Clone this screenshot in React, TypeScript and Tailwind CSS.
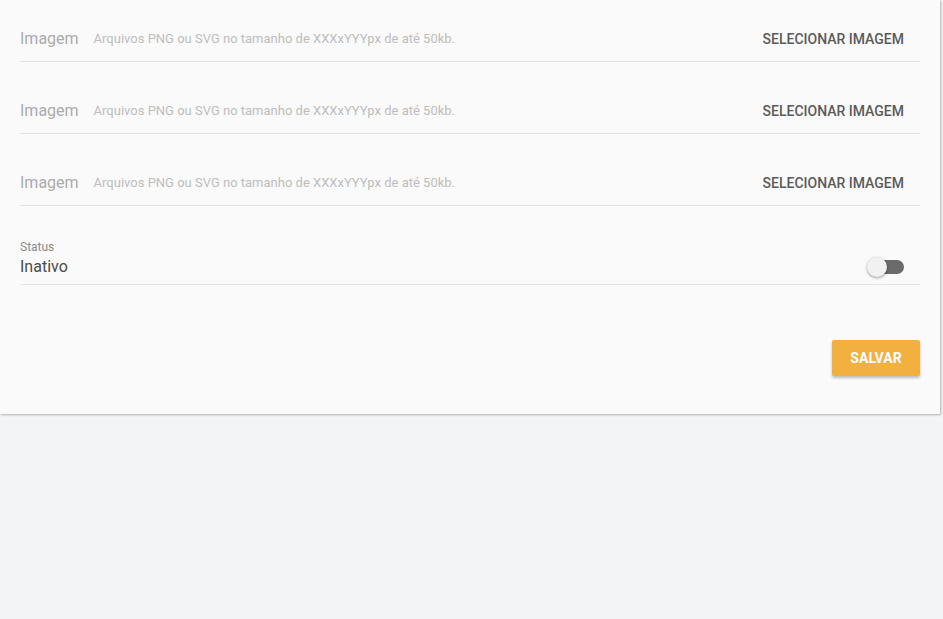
const font = { fontFamily: 'Roboto, "Liberation Sans", sans-serif' };

function ImageRow({ first }: { first?: boolean }) {
  return (
    <div className={`flex items-end justify-between border-b border-[#e3e3e3] pb-[10px] ${first ? 'h-[62px]' : 'h-[72px]'}`}>
      <div className="flex items-center">
        <span className="text-[16px] leading-6 text-[#ababab]">Imagem</span>
        <span className="ml-[15px] text-[13px] leading-6 text-[#bdbdbd]">
          Arquivos PNG ou SVG no tamanho de XXXxYYYpx de até 50kb.
        </span>
      </div>
      <button className="mr-4 text-[14px] font-medium leading-6 text-[#5a5a5a] uppercase">Selecionar imagem</button>
    </div>
  );
}

export default function App() {
  return (
    <div className="min-h-[619px] w-full bg-[#f3f4f6]" style={font}>
      <div className="w-[940px] bg-[#fafafa] px-5 pb-[38px] shadow-[1px_1px_2px_rgba(0,0,0,0.28)]">
        <ImageRow first />
        <ImageRow />
        <ImageRow />

        <div className="border-b border-[#e3e3e3] pt-[33px] pb-[5px]">
          <div className="text-[12px] leading-4 text-[#8a8a8a]">Status</div>
          <div className="flex items-center justify-between">
            <span className="text-[16px] leading-6 text-[#4a4a4a]">Inativo</span>
            <div className="relative mr-4 h-[14px] w-[34px] rounded-full bg-[#6b6b6b]">
              <div className="absolute left-[-3px] top-[-3px] h-5 w-5 rounded-full bg-[#f1f1f1] shadow-[0_1px_3px_rgba(0,0,0,0.4)]" />
            </div>
          </div>
        </div>

        <div className="mt-[55px] flex justify-end">
          <button className="h-9 w-[88px] rounded-[2px] bg-[#f2b03f] text-[14px] font-bold text-white shadow-[0_2px_3px_rgba(0,0,0,0.25)]">
            SALVAR
          </button>
        </div>
      </div>
    </div>
  );
}
